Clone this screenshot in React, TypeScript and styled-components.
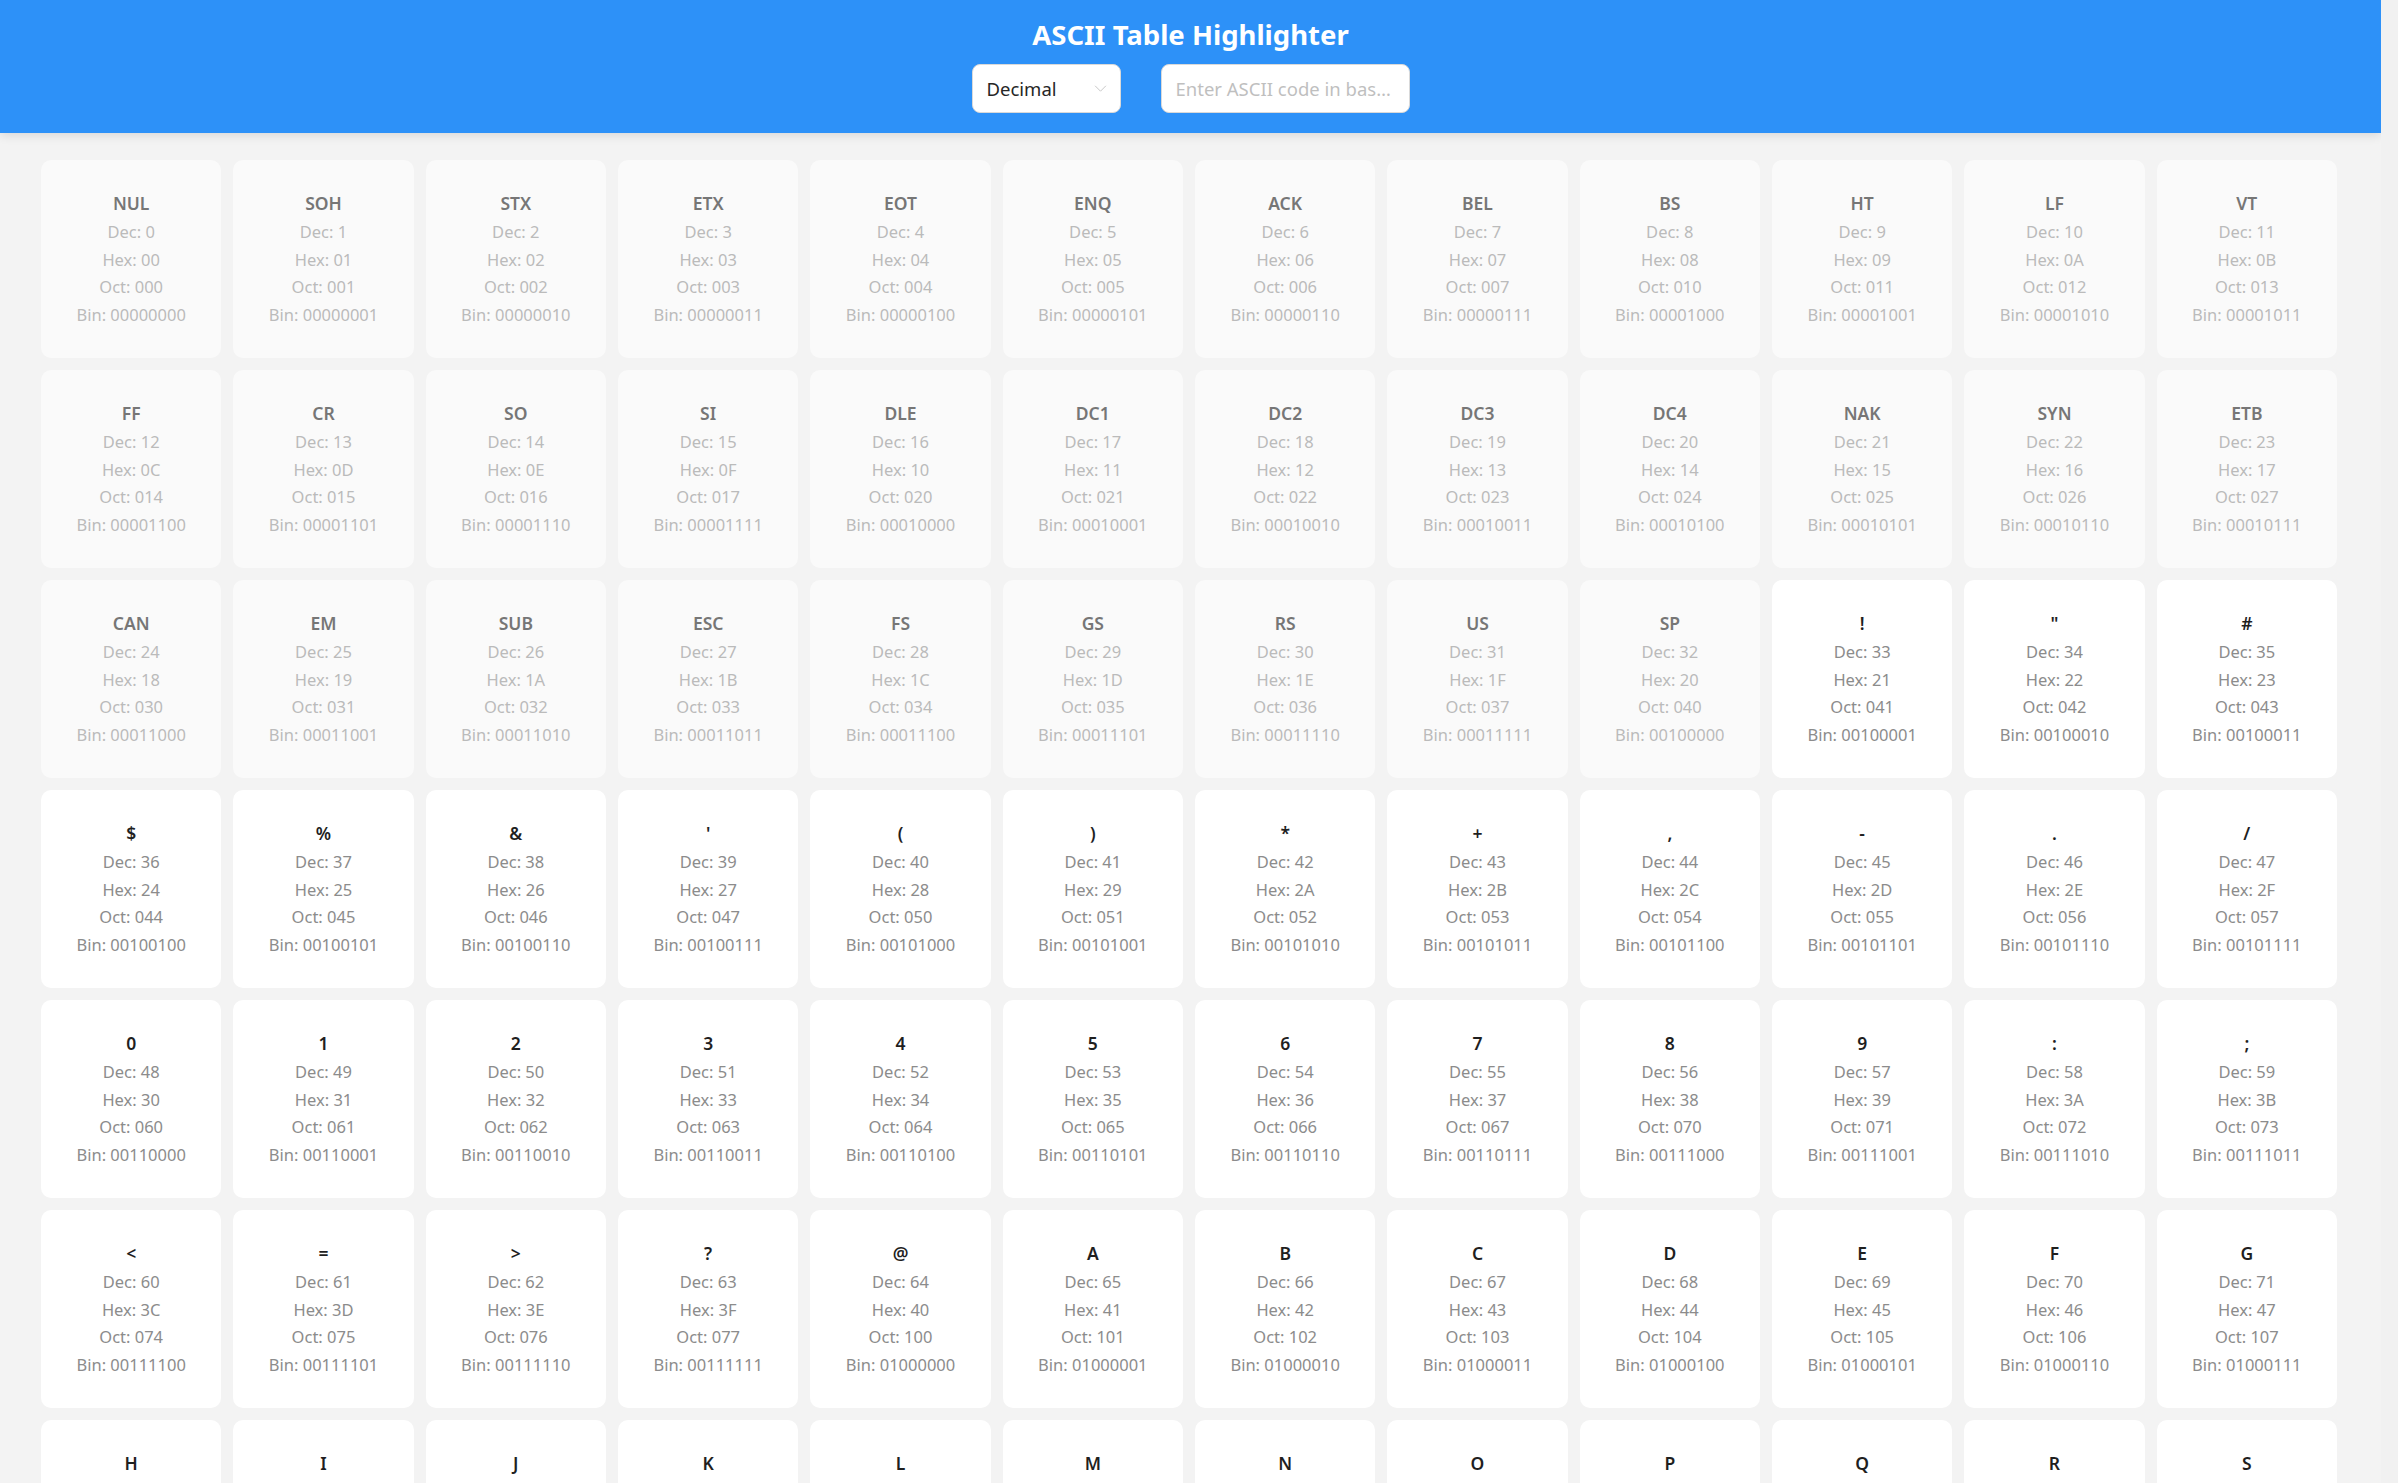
import React, { useState } from "react";
import styled, { createGlobalStyle } from "styled-components";

const GlobalStyle = createGlobalStyle`
  html { background: #f1f1f1; }
  html, body { margin: 0; padding: 0; }
  body {
    width: calc(100% - 17px);
    min-height: 100vh;
    background: #f3f3f3;
    font-family: "Segoe UI", "Noto Sans", "Open Sans", sans-serif;
  }
  * { box-sizing: border-box; }
`;

const CONTROL_NAMES = [
  "NUL", "SOH", "STX", "ETX", "EOT", "ENQ", "ACK", "BEL", "BS", "HT", "LF", "VT",
  "FF", "CR", "SO", "SI", "DLE", "DC1", "DC2", "DC3", "DC4", "NAK", "SYN", "ETB",
  "CAN", "EM", "SUB", "ESC", "FS", "GS", "RS", "US", "SP",
];

const Header = styled.header`
  background: #2d91f8;
  box-shadow: 0 2px 10px rgba(0, 0, 0, 0.12);
  padding: 16px 0 20px;
  display: flex;
  flex-direction: column;
  align-items: center;
  gap: 10px;
  position: relative;
  z-index: 1;
`;

const Title = styled.h1`
  margin: 0;
  color: #ffffff;
  font-size: 27.5px;
  font-weight: 700;
  line-height: 38px;
`;

const Controls = styled.div`
  display: flex;
  gap: 40px;
  align-items: center;
`;

const SelectBox = styled.div`
  width: 149px;
  height: 49px;
  background: #fff;
  border: 1px solid #d9d9d9;
  border-radius: 8px;
  display: flex;
  align-items: center;
  justify-content: space-between;
  padding: 0 13px 0 14px;
  color: #262626;
  font-size: 18.5px;
  cursor: pointer;
`;

const Chevron = styled.svg`
  width: 13px;
  height: 13px;
  color: #bfbfbf;
`;

const SearchInput = styled.input`
  width: 249px;
  height: 49px;
  background: #fff;
  border: 1px solid #d9d9d9;
  border-radius: 8px;
  padding: 0 14px;
  font-family: inherit;
  font-size: 18.5px;
  color: #262626;
  outline: none;
  text-overflow: ellipsis;
  &::placeholder { color: #bfbfbf; }
`;

const Grid = styled.main`
  display: grid;
  grid-template-columns: repeat(12, 1fr);
  gap: 12px;
  padding: 27px 44px 40px 41px;
`;

const Card = styled.div<{ $dim: boolean }>`
  background: ${(p) => (p.$dim ? "#fafafa" : "#ffffff")};
  border-radius: 10px;
  padding: 29px 6px 30px;
  display: flex;
  flex-direction: column;
  align-items: center;
  text-align: center;
`;

const Symbol = styled.div<{ $dim: boolean }>`
  font-size: 17.5px;
  font-weight: 600;
  line-height: 29px;
  color: ${(p) => (p.$dim ? "#767676" : "#1f1f1f")};
  white-space: pre;
`;

const Info = styled.div<{ $dim: boolean }>`
  font-size: 16.5px;
  line-height: 27.5px;
  color: ${(p) => (p.$dim ? "#bbbbbb" : "#8c8c8c")};
`;

const pad = (s: string, n: number) => s.padStart(n, "0");

export default function App() {
  const [value, setValue] = useState("");
  const codes = Array.from({ length: 128 }, (_, i) => i);
  return (
    <>
      <GlobalStyle />
      <Header>
        <Title>ASCII Table Highlighter</Title>
        <Controls>
          <SelectBox>
            <span>Decimal</span>
            <Chevron viewBox="0 0 24 24" fill="none" stroke="currentColor" strokeWidth="1.6">
              <path d="M2 7l10 10L22 7" />
            </Chevron>
          </SelectBox>
          <SearchInput
            value={value}
            onChange={(e) => setValue(e.target.value)}
            placeholder="Enter ASCII code in base 10"
          />
        </Controls>
      </Header>
      <Grid>
        {codes.map((c) => {
          const dim = c <= 32 || c === 127;
          const label = c <= 32 ? CONTROL_NAMES[c] : c === 127 ? "DEL" : String.fromCharCode(c);
          return (
            <Card key={c} $dim={dim}>
              <Symbol $dim={dim}>{label}</Symbol>
              <Info $dim={dim}>Dec: {c}</Info>
              <Info $dim={dim}>Hex: {pad(c.toString(16).toUpperCase(), 2)}</Info>
              <Info $dim={dim}>Oct: {pad(c.toString(8), 3)}</Info>
              <Info $dim={dim}>Bin: {pad(c.toString(2), 8)}</Info>
            </Card>
          );
        })}
      </Grid>
    </>
  );
}
